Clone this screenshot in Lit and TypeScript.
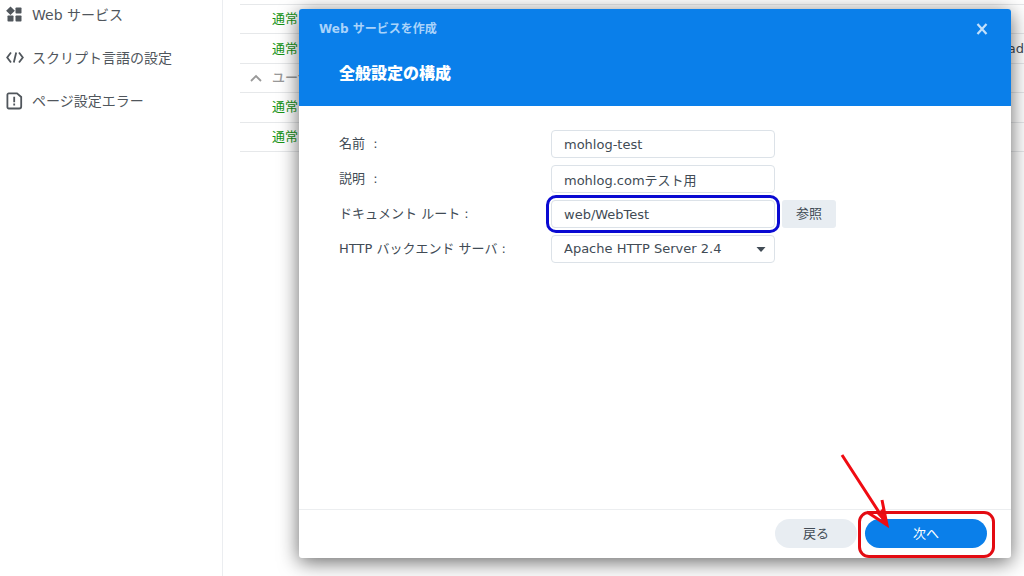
import { LitElement, html, css, svg } from "lit";
import { customElement, state } from "lit/decorators.js";

const gridIcon = svg`<path d="M4.5 0 8.9 4.2 4.5 8.4 .1 4.2Z"/><rect x="9.5" y="1" width="6" height="6" rx=".8"/><rect x="1.5" y="9" width="6" height="6" rx=".8"/><rect x="9.5" y="9" width="6" height="6" rx=".8"/>`;
const codeIcon = svg`<path d="M5 3 1.2 8 5 13M13 3l3.8 5L13 13M10.2 3 7.8 13" fill="none" stroke="currentColor" stroke-width="1.8"/>`;
const errorIcon = svg`<path d="M2.8.9H11l4.2 3.6V14a2 2 0 0 1-2 2H2.8a1.4 1.4 0 0 1-1.4-1.4V2.3A1.4 1.4 0 0 1 2.8.9Z" fill="none" stroke="currentColor" stroke-width="1.8"/><path d="M8.2 4.2v5.6M8.2 11v2" fill="none" stroke="currentColor" stroke-width="1.8"/>`;

@customElement("app-root")
export class AppRoot extends LitElement {
  @state() private values = {
    name: "mohlog-test",
    description: "mohlog.comテスト用",
    root: "web/WebTest",
  };

  static styles = css`
    :host {
      display: block;
      position: relative;
      height: 100vh;
      overflow: hidden;
      background: #fff;
      color: #414b55;
      font: 13px/20px "DejaVu Sans", "Noto Sans CJK JP", sans-serif;
    }
    * { box-sizing: border-box; }
    button, input, select { font: inherit; color: inherit; margin: 0; }
    button { border: 0; padding: 0; cursor: pointer; }
    .page { display: flex; height: 100%; }
    .sidebar {
      flex: none;
      width: 223px;
      border-right: 1px solid #ebedf0;
      padding: 5px 6px;
      display: flex;
      flex-direction: column;
      gap: 23px;
      font-size: 14px;
    }
    .nav { display: flex; align-items: center; gap: 8px; color: #50565c; text-decoration: none; white-space: nowrap; }
    .nav svg { flex: none; width: 18px; height: 18px; fill: currentColor; }
    .main { flex: 1; min-width: 0; padding-left: 17px; }
    .list {
      width: 100%;
      height: 148px;
      margin-top: 4px;
      border-collapse: collapse;
      border-top: 1px solid #e6e8ea;
    }
    .list td { padding: 0; border-bottom: 1px solid #e6e8ea; white-space: nowrap; }
    .list .mark { width: 32px; padding-left: 10px; }
    .mark svg { display: block; width: 12px; height: 8px; }
    .status { color: #179417; }
    .group { color: #999; font-weight: 500; }
    .list .host { text-align: right; }
    .overlay { position: absolute; inset: 0; padding: 9px 13px 18px 299px; display: flex; }
    .dialog {
      flex: 1;
      min-width: 0;
      display: flex;
      flex-direction: column;
      background: #fff;
      border-radius: 3px;
      box-shadow: 0 4px 20px rgba(0, 0, 0, 0.6);
    }
    .head {
      background: #0a7fea;
      border-radius: 3px 3px 0 0;
      padding: 10px 20px 22px;
      display: flex;
      flex-direction: column;
      gap: 25px;
    }
    .bar { display: flex; justify-content: space-between; align-items: center; }
    .title { margin: 0; font-size: 12px; line-height: 20px; font-weight: 700; color: #a9d3fa; }
    .close { width: 18px; height: 20px; display: grid; place-items: center; background: none; color: #c3e0fb; }
    .close svg { width: 12px; height: 12px; }
    .step { margin: 0; padding-left: 20px; font-size: 16px; line-height: 20px; font-weight: 900; color: #fff; }
    .form { flex: 1; padding: 24px 40px; display: flex; flex-direction: column; gap: 7px; }
    .row { display: flex; align-items: center; }
    .label { width: 212px; white-space: pre; }
    .field { position: relative; width: 224px; height: 28px; }
    .input {
      display: block;
      width: 100%;
      height: 28px;
      padding: 0 12px;
      border: 1px solid #dce2e8;
      border-radius: 4px;
      background: #fff;
      outline: none;
      appearance: none;
    }
    select.input { padding: 0 12px; }
    .caret { position: absolute; right: 9px; top: 12px; width: 10px; height: 5px; fill: #414b55; pointer-events: none; }
    .marked::after {
      content: "";
      position: absolute;
      inset: -5px;
      border: 3px solid #0a0ad2;
      border-radius: 10px;
      pointer-events: none;
    }
    .browse { width: 54px; height: 28px; margin-left: 7px; border-radius: 3px; background: #e8edf2; }
    .foot {
      border-top: 1px solid #eceef0;
      padding: 9px 24px 10px;
      display: flex;
      justify-content: flex-end;
      gap: 8px;
    }
    .pill { height: 29px; border-radius: 15px; }
    .back { width: 82px; background: #e8edf2; }
    .next { width: 122px; background: #0a7fea; color: #fff; }
    .target { position: relative; display: flex; }
    .target::after {
      content: "";
      position: absolute;
      inset: -8px -8px -10px -7px;
      border: 3px solid #e30b12;
      border-radius: 11px;
      pointer-events: none;
    }
    .arrow { position: absolute; left: -26px; top: -67px; width: 52px; height: 76px; pointer-events: none; }
  `;

  private edit(key: "name" | "description" | "root", e: Event) {
    this.values = { ...this.values, [key]: (e.target as HTMLInputElement).value };
  }

  private field(key: "name" | "description" | "root", label: string, marked = false) {
    return html`<div class="row">
      <label class="label" for=${key}>${label}</label>
      <div class="field ${marked ? "marked" : ""}">
        <input class="input" id=${key} type="text" .value=${this.values[key]} @input=${(e: Event) => this.edit(key, e)} />
      </div>
      ${marked ? html`<button class="browse" type="button">参照</button>` : ""}
    </div>`;
  }

  private nav(icon: unknown, text: string) {
    return html`<a class="nav" href="#"><svg viewBox="0 0 18 17" aria-hidden="true">${icon}</svg>${text}</a>`;
  }

  private item(host = "") {
    return html`<tr><td class="mark"></td><td class="status">通常</td><td class="host">${host}</td></tr>`;
  }

  render() {
    return html`
      <div class="page">
        <nav class="sidebar">
          ${this.nav(gridIcon, "Web サービス")}
          ${this.nav(codeIcon, "スクリプト言語の設定")}
          ${this.nav(errorIcon, "ページ設定エラー")}
        </nav>
        <main class="main">
          <table class="list">
            <tbody>
              ${this.item()} ${this.item("ad")}
              <tr>
                <td class="mark"><svg viewBox="0 0 12 8" aria-hidden="true"><path d="M1 7l5-5 5 5" fill="none" stroke="#999" stroke-width="1.8"/></svg></td>
                <td class="group" colspan="2">ユーザ</td>
              </tr>
              ${this.item()} ${this.item()}
            </tbody>
          </table>
        </main>
      </div>
      <div class="overlay">
        <section class="dialog" role="dialog" aria-labelledby="title">
          <header class="head">
            <div class="bar">
              <h1 class="title" id="title">Web サービスを作成</h1>
              <button class="close" type="button" aria-label="閉じる">
                <svg viewBox="0 0 12 12"><path d="M1.5 1l9 10M10.5 1l-9 10" fill="none" stroke="currentColor" stroke-width="2.2"/></svg>
              </button>
            </div>
            <h2 class="step">全般設定の構成</h2>
          </header>
          <form class="form">
            ${this.field("name", "名前  :")}
            ${this.field("description", "説明  :")}
            ${this.field("root", "ドキュメント ルート :", true)}
            <div class="row">
              <label class="label" for="backend">HTTP バックエンド サーバ :</label>
              <div class="field">
                <select class="input" id="backend"><option>Apache HTTP Server 2.4</option></select>
                <svg class="caret" viewBox="0 0 10 5" aria-hidden="true"><path d="M.5 0h9L5 5z"/></svg>
              </div>
            </div>
          </form>
          <footer class="foot">
            <button class="pill back" type="button">戻る</button>
            <div class="target">
              <button class="pill next" type="button">次へ</button>
              <svg class="arrow" viewBox="0 0 52 76" aria-hidden="true">
                <path d="M3 3 47 71M43 48l5 25L28 60" fill="none" stroke="#f00b12" stroke-width="3"/><path d="M38 62l6-6 5 18z" fill="#f00b12"/>
              </svg>
            </div>
          </footer>
        </section>
      </div>
    `;
  }
}
